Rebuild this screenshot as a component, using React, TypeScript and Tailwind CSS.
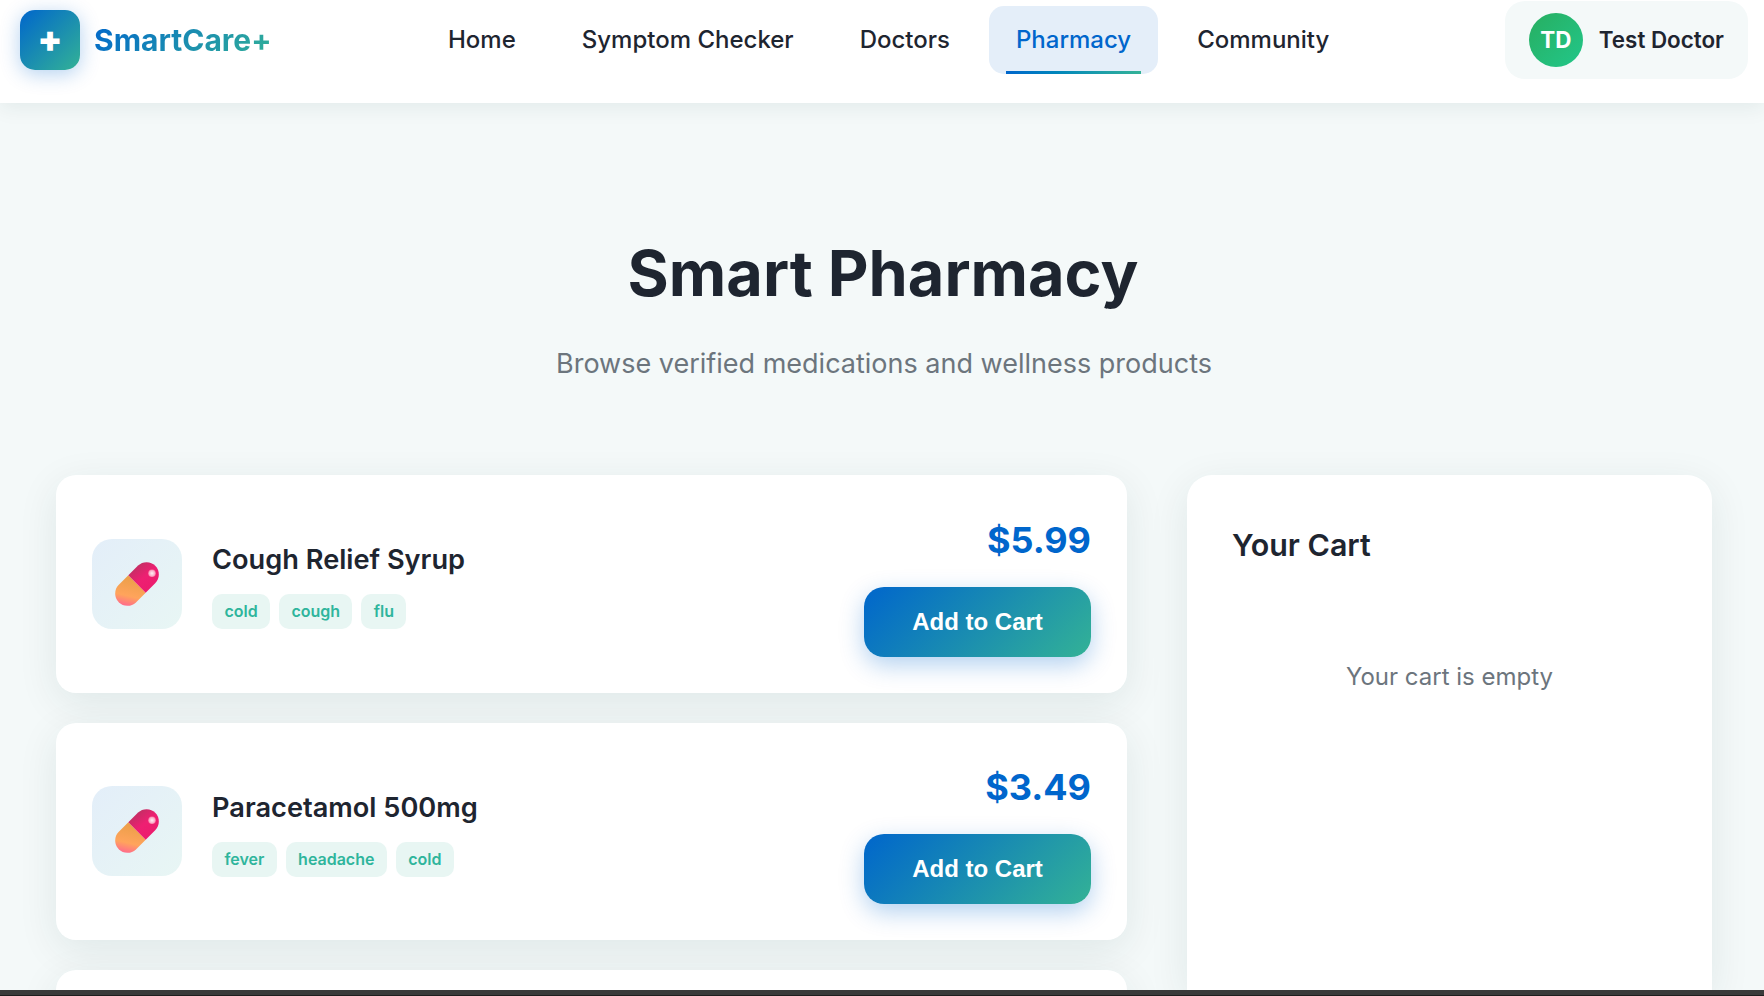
const navItems = ['Home', 'Symptom Checker', 'Doctors', 'Pharmacy', 'Community']

const products = [
  { name: 'Cough Relief Syrup', price: '$5.99', tags: ['cold', 'cough', 'flu'] },
  { name: 'Paracetamol 500mg', price: '$3.49', tags: ['fever', 'headache', 'cold'] },
]

function Pill({ id }: { id: string }) {
  return (
    <svg width="46" height="46" viewBox="0 0 46 46">
      <defs>
        <linearGradient id={`${id}top`} gradientUnits="userSpaceOnUse" x1="20" y1="6" x2="36" y2="26">
          <stop offset="0" stopColor="#c22f63" />
          <stop offset="0.55" stopColor="#ee1f72" />
          <stop offset="1" stopColor="#ec1d6e" />
        </linearGradient>
        <linearGradient id={`${id}bottom`} gradientUnits="userSpaceOnUse" x1="18" y1="18" x2="12" y2="44">
          <stop offset="0" stopColor="#ed9f4a" />
          <stop offset="0.65" stopColor="#ffa45c" />
          <stop offset="1" stopColor="#ff7088" />
        </linearGradient>
        <radialGradient id={`${id}shine`}>
          <stop offset="0" stopColor="#fff0f5" />
          <stop offset="0.7" stopColor="#fbb0cb" />
          <stop offset="1" stopColor="#f8779f" />
        </radialGradient>
      </defs>
      <path d="M14.34 14.34 L31.66 31.66 L21.91 41.41 A12.25 12.25 0 0 1 4.59 24.09 Z" fill={`url(#${id}bottom)`} />
      <path d="M14.34 14.34 L24.09 4.59 A12.25 12.25 0 0 1 41.41 21.91 L31.66 31.66 Z" fill={`url(#${id}top)`} />
      <circle cx="38" cy="12.3" r="3.8" fill={`url(#${id}shine)`} />
    </svg>
  )
}

function ProductCard({ name, price, tags, id }: { name: string; price: string; tags: string[]; id: string }) {
  return (
    <div className="flex h-[217.6px] shrink-0 items-center justify-between rounded-[20px] bg-white px-9 shadow-[0_10px_40px_rgba(0,50,50,0.09)]">
      <div className="flex items-center gap-[30px]">
        <div className="flex h-[90px] w-[90px] items-center justify-center rounded-[20px] bg-gradient-to-br from-[#e3eef9] to-[#e8f6f4]">
          <Pill id={id} />
        </div>
        <div className="pt-[0.5px]">
          <h3 className="mb-[14px] text-[27.2px] leading-[41px] font-semibold text-[#1e2530]">{name}</h3>
          <div className="flex gap-[9px]">
            {tags.map((tag) => (
              <span
                key={tag}
                className="rounded-[10px] bg-[#e8f6f3] px-[12.4px] py-[6px] text-[16px] leading-[23px] font-semibold text-[#2fb59c]"
              >
                {tag}
              </span>
            ))}
          </div>
        </div>
      </div>
      <div className="flex flex-col items-end gap-[18px]">
        <div className="text-[36px] leading-[58px] font-bold text-[#0066cc]">{price}</div>
        <button className="h-[70px] w-[227px] rounded-[20px] bg-[linear-gradient(135deg,#0066cc,#33b296)] font-['Liberation_Sans',sans-serif] text-[24px] font-bold text-white shadow-[0_8px_25px_rgba(0,102,204,0.3)]">
          Add to Cart
        </button>
      </div>
    </div>
  )
}

export default function App() {
  return (
    <div className="flex h-[996px] flex-col overflow-hidden bg-[#f4f9f9] font-['Inter',sans-serif]">
      <header className="z-10 flex h-[103px] shrink-0 items-start justify-between bg-white pr-4 pl-5 shadow-[0_4px_20px_rgba(0,50,50,0.08)]">
        <div className="mt-[10px] flex w-[271px] items-center gap-[14px]">
          <div className="flex h-[60px] w-[60px] items-center justify-center rounded-[15px] bg-[linear-gradient(135deg,#0066cc,#33b296)] pb-[2px] text-[36px] leading-none font-black text-white shadow-[0_4px_20px_rgba(0,102,204,0.3)]">
            +
          </div>
          <span className="bg-[linear-gradient(135deg,#0066cc,#33b296)] bg-clip-text text-[30px] font-bold text-transparent">
            SmartCare+
          </span>
        </div>
        <nav className="mt-[6px] ml-[130px] flex gap-3">
          {navItems.map((item) => (
            <a
              key={item}
              className={
                item === 'Pharmacy'
                  ? 'relative flex h-[68px] items-center rounded-[15px] bg-[#e4eef9] px-[27px] text-[24px] font-medium text-[#0066cc]'
                  : 'flex h-[68px] items-center px-[27px] text-[24px] font-medium text-[#1e2530]'
              }
            >
              {item}
              {item === 'Pharmacy' && (
                <span className="absolute right-[17px] bottom-0 left-[17px] h-[3px] bg-gradient-to-r from-[#0066cc] to-[#33b296]" />
              )}
            </a>
          ))}
        </nav>
        <div className="mt-px ml-auto flex h-[78px] items-center gap-4 rounded-[20px] bg-[#f4f9f9] pr-6 pl-6">
          <div className="flex h-[54px] w-[54px] items-center justify-center rounded-full bg-gradient-to-br from-[#27ae60] to-[#22c78a] text-[22.4px] font-bold text-white">
            TD
          </div>
          <span className="text-[22.4px] font-semibold text-[#1e2530]">Test Doctor</span>
        </div>
      </header>

      <main className="flex min-h-0 flex-1 flex-col pt-[122px] pr-[52px] pl-14">
        <h1 className="pr-[2px] text-center text-[63px] leading-[96px] font-bold text-[#1e2530]">Smart Pharmacy</h1>
        <p className="mt-[22px] text-center text-[27px] leading-[42px] text-[#6c757d]">
          Browse verified medications and wellness products
        </p>
        <div className="mt-[90px] flex min-h-0 flex-1 gap-[60px]">
          <div className="flex w-[1071px] flex-col gap-[30px]">
            {products.map((p, i) => (
              <ProductCard key={p.name} id={`pill${i}`} {...p} />
            ))}
            <div className="h-[217.6px] shrink-0 rounded-[20px] bg-white shadow-[0_10px_40px_rgba(0,50,50,0.09)]" />
          </div>
          <aside className="flex-1 rounded-t-[25px] bg-white px-[45px] pt-[46px] shadow-[0_10px_40px_rgba(0,50,50,0.09)]">
            <h2 className="text-[30.4px] leading-[48px] font-semibold text-[#1e2530]">Your Cart</h2>
            <p className="mt-[90px] text-center text-[24px] text-[#6c757d]">Your cart is empty</p>
          </aside>
        </div>
      </main>
      <div className="z-10 h-[6px] shrink-0 border-b border-[#1e1e1e] bg-[#3a3a3a]" />
    </div>
  )
}
